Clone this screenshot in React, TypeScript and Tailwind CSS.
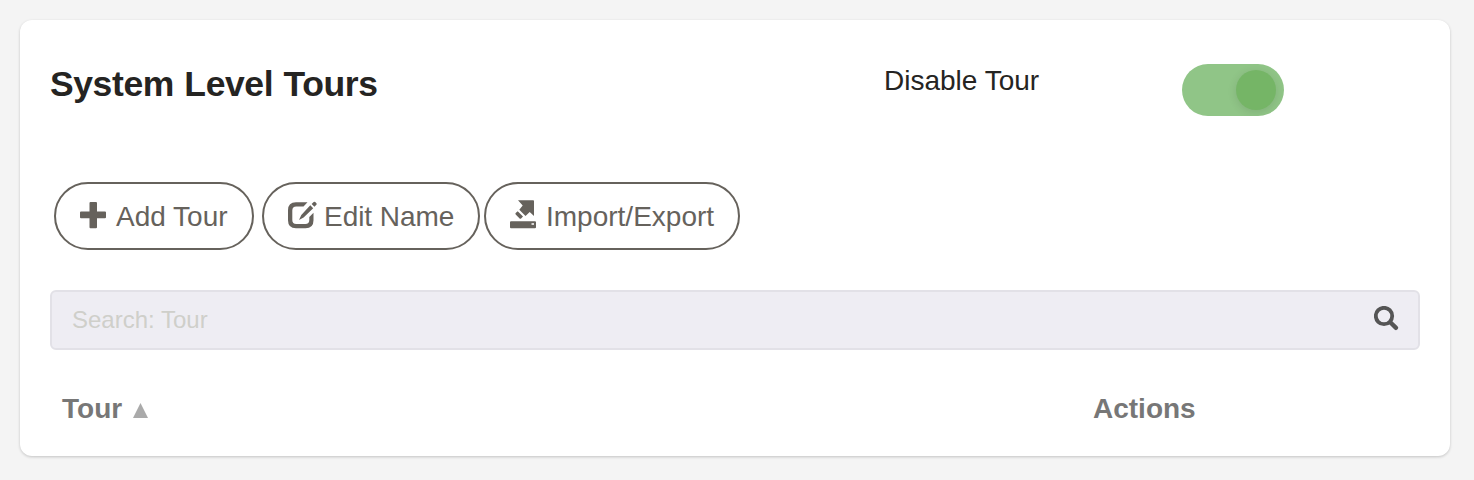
import type { ReactNode } from "react";

function PlusIcon() {
  return (
    <svg className="mb-[3px] h-8 w-[26px] shrink-0" viewBox="0 0 26 32" fill="currentColor">
      <path d="M9.500 4q0-1 1-1h5.500q1 0 1 1v8.500h8q1 0 1 1v4.700q0 1-1 1h-8v9q0 1-1 1h-5.500q-1 0-1-1v-9h-8.500q-1 0-1-1v-4.700q0-1 1-1h8.500z" />
    </svg>
  );
}

function EditIcon() {
  return (
    <svg className="mb-[3px] h-8 w-[30px] shrink-0" viewBox="0 0 30 32" fill="currentColor">
      <path d="M19.500 3.300H8Q0 3.300 0 11.300v10q0 8 8 8h9.500q8 0 8-8v-7.500l-4.200 4.200v3q0 4-4 4H8.300q-4 0-4-4V11.500q0-4 4-4H15.500z" />
      <path d="M22.300 6.300l2.900 2.900-9.600 9.300-4.600 2.600 2.300-5.200zM23.600 5l2.100-2q.7-.7 1.500 0l1.200 1.200q.7.7 0 1.500l-2 2z" />
    </svg>
  );
}

function OpenIcon() {
  return (
    <svg className="mb-[3px] h-8 w-[26px] shrink-0" viewBox="0 0 26 32" fill="currentColor">
      <path d="M8 1.300h15.200q.8 0 .8.800v15l-4.300-4-4.200 3.900-6.200-6.200 3.400-4.200z" />
      <path d="M7.700 12.300l5.300 5.300-1.900 1.800q-.8.600-1.500 0l-3.900-3.900q-.7-.8 0-1.400z" />
      <path fillRule="evenodd" d="M1 22.300h24q1 0 1 1v5q0 1-1 1H1q-1 0-1-1v-5q0-1 1-1zm20.500 2v1.500h2.500v-1.500z" />
    </svg>
  );
}

function PillButton({ icon, label, className }: { icon: ReactNode; label: string; className: string }) {
  return (
    <button
      type="button"
      className={`flex h-[68px] items-center rounded-full border-2 border-[#66625c] text-[28px] whitespace-nowrap text-[#66625c] ${className}`}
    >
      {icon}
      <span className="pt-px">{label}</span>
    </button>
  );
}

export default function App() {
  return (
    <main className="h-[480px] w-[1474px] overflow-hidden bg-[#f4f4f4] p-5 font-['Liberation_Sans',Arial,sans-serif]">
      <section className="h-[436px] w-[1430px] rounded-xl bg-white px-[30px] shadow-[0_1px_3px_rgba(0,0,0,0.2)]">
        <header className="flex h-[162px] pt-11">
          <h1 className="w-[834px] text-[35.5px] leading-[41px] font-bold tracking-[-0.4px] text-[#252422] [word-spacing:1px]">
            System Level Tours
          </h1>
          <span className="w-[298px] text-[28px] leading-[34px] text-[#252422]">Disable Tour</span>
          <button
            type="button"
            role="switch"
            aria-checked="true"
            aria-label="Disable Tour"
            className="flex h-[52px] w-[102px] items-center justify-end overflow-hidden rounded-full bg-[#90c587] pr-2"
          >
            <span className="size-10 rounded-full bg-[#75b566] shadow-[0_2px_10px_rgba(0,0,0,0.11)]" />
          </button>
        </header>

        <div className="flex pl-1">
          <PillButton icon={<PlusIcon />} label="Add Tour" className="mr-2 w-[200px] gap-[10px] pl-6" />
          <PillButton icon={<EditIcon />} label="Edit Name" className="mr-1 w-[218px] gap-[6px] pl-6 tracking-[-0.05px]" />
          <PillButton icon={<OpenIcon />} label="Import/Export" className="w-[256px] gap-[10px] pl-6" />
        </div>

        <label className="mt-10 flex h-[60px] items-center rounded-md border-2 border-[#e2e1e7] bg-[#eeedf3] pr-[18px] pl-5">
          <input
            type="text"
            aria-label="Search"
            placeholder="Search: Tour"
            className="h-full min-w-0 flex-1 bg-transparent text-2xl text-[#66625c] outline-none placeholder:text-[#cfcfca]"
          />
          <svg className="mb-[3px] size-[26px]" viewBox="0 0 26 26" fill="none" stroke="#555" aria-hidden="true">
            <circle cx="10" cy="10" r="8.200" strokeWidth="3.800" />
            <path d="M16.500 16.500l5.500 5.300" strokeWidth="4.400" strokeLinecap="round" />
          </svg>
        </label>

        <div className="flex pt-[43px] text-[28px] leading-8 font-bold text-[#777]">
          <div className="flex w-[1043px] items-center pl-3">
            <span>Tour</span>
            <svg className="mt-[3px] ml-[11px] h-[15px] w-[15px]" viewBox="0 0 15 15" fill="#aaa" aria-hidden="true">
              <path d="M7.500 0L15 15H0z" />
            </svg>
          </div>
          <span>Actions</span>
        </div>
      </section>
    </main>
  );
}
